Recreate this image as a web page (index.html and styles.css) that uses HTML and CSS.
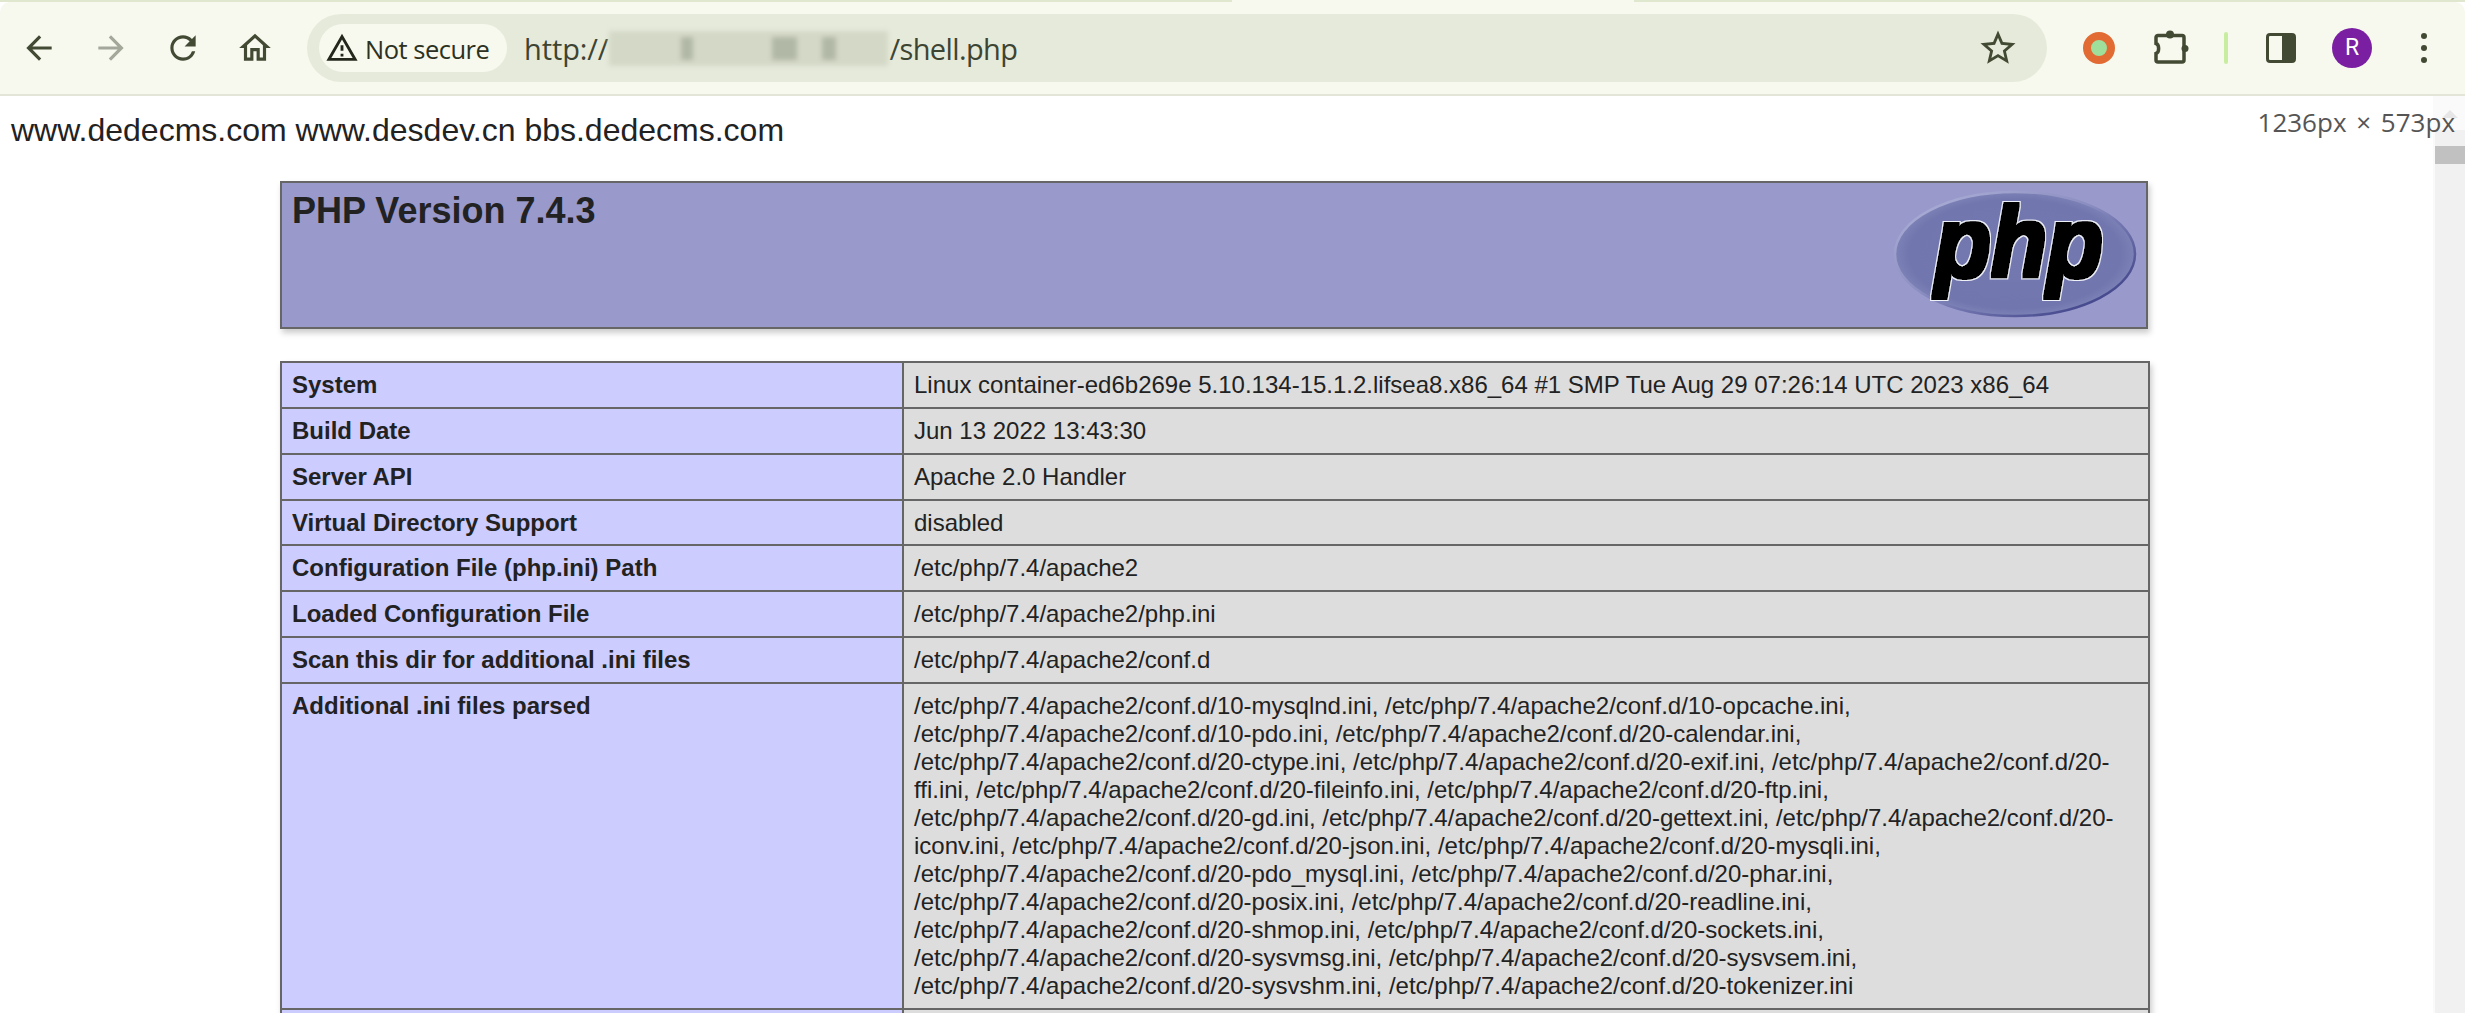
FILE: index.html
```html
<!DOCTYPE html>
<html lang="en">
<head>
<meta charset="utf-8">
<title>phpinfo()</title>
<link rel="stylesheet" href="styles.css">
</head>
<body>
<div class="browser">
  <div class="topstrip"><div class="tab-edge"></div></div>
  <header class="toolbar">
    <button class="nav"><svg class="nav-icon" viewBox="0 0 24 24"><path d="M20 11H7.83l5.59-5.59L12 4l-8 8 8 8 1.41-1.41L7.83 13H20v-2z"/></svg></button>
    <button class="nav dim"><svg class="nav-icon" viewBox="0 0 24 24"><path d="M12 4l-1.41 1.41L16.17 11H4v2h12.17l-5.58 5.59L12 20l8-8z"/></svg></button>
    <button class="nav"><svg class="nav-icon" viewBox="0 0 24 24"><path d="M17.65 6.35A7.958 7.958 0 0 0 12 4c-4.42 0-7.99 3.58-7.99 8s3.57 8 7.99 8c3.73 0 6.84-2.55 7.73-6h-2.08A5.99 5.99 0 0 1 12 18c-3.31 0-6-2.69-6-6s2.69-6 6-6c1.66 0 3.14.69 4.22 1.78L13 11h7V4l-2.35 2.35z"/></svg></button>
    <button class="nav"><svg class="nav-icon" viewBox="0 0 24 24"><path d="M12 5.69l5 4.5V18h-2v-6H9v6H7v-7.81l5-4.5M12 3 2 12h3v8h6v-6h2v6h6v-8h3L12 3z"/></svg></button>
    <div class="omnibox">
      <div class="chip">
        <svg class="warn" viewBox="0 0 24 24"><path d="M12 5.99 19.53 19H4.47L12 5.99M12 2 1 21h22L12 2zm1 14h-2v2h2v-2zm0-6h-2v4h2v-4z"/></svg>
        <span>Not secure</span>
      </div>
      <div class="url"><span>http://</span><span class="blurred"><i class="b1"></i><i class="b2"></i><i class="b3"></i></span><span class="path">/shell.php</span></div>
      <svg class="star" viewBox="0 0 24 24"><path d="M22 9.24l-7.19-.62L12 2 9.19 8.63 2 9.24l5.46 4.73L5.82 21 12 17.27 18.18 21l-1.63-7.03L22 9.24zM12 15.4l-3.76 2.27 1-4.28-3.32-2.88 4.38-.38L12 6.1l1.71 4.04 4.38.38-3.32 2.88 1 4.28L12 15.4z"/></svg>
    </div>
    <div class="tools">
      <div class="ext-ring"></div>
      <svg class="puzzle" viewBox="0 0 36 36"><path class="puzzle-body" d="M5 5.500H29a2 2 0 0 1 2 2V30a2 2 0 0 1-2 2H5a2 2 0 0 1-2-2V23.500c3.500-1 3.500-9 0-10V7.500a2 2 0 0 1 2-2z"/><circle class="puzzle-knob" cx="17" cy="4.500" r="4"/><circle class="puzzle-knob" cx="32" cy="18.500" r="3.500"/></svg>
      <div class="divider"></div>
      <svg class="panel" viewBox="0 0 30 30"><rect x="1.500" y="1.500" width="27" height="27" rx="2.500"/><path d="M16 1.500h10a2.500 2.500 0 0 1 2.500 2.500v22a2.500 2.500 0 0 1-2.500 2.500H16z"/></svg>
      <div class="avatar">R</div>
      <div class="dots"><i></i><i></i><i></i></div>
    </div>
  </header>
  <div class="viewport">
    <main class="page">
      <p class="ads">www.dedecms.com www.desdev.cn bbs.dedecms.com</p>
      <div class="center">
        <table class="info head">
          <tr class="h"><td>
            <svg class="logo" viewBox="0 0 242 126">
              <defs>
                <radialGradient id="lg" cx="0.5" cy="0.5" r="0.55">
                  <stop offset="0" stop-color="#7478b0"/>
                  <stop offset="0.8" stop-color="#7177ae"/>
                  <stop offset="1" stop-color="#8589bc"/>
                </radialGradient>
                <linearGradient id="rim" x1="0.1" y1="0.1" x2="0.9" y2="0.9">
                  <stop offset="0" stop-color="#a9acd4"/>
                  <stop offset="0.45" stop-color="#8a8dc0"/>
                  <stop offset="1" stop-color="#3f4389"/>
                </linearGradient>
                <filter id="heavy" x="-10%" y="-10%" width="120%" height="120%">
                  <feMorphology in="SourceAlpha" operator="dilate" radius="3.200" result="halo"/>
                  <feFlood flood-color="#eef0f8"/>
                  <feComposite in2="halo" operator="in" result="white"/>
                  <feMorphology in="SourceAlpha" operator="dilate" radius="1.800" result="body"/>
                  <feMerge><feMergeNode in="white"/><feMergeNode in="body"/></feMerge>
                </filter>
              </defs>
              <ellipse cx="121" cy="63" rx="120" ry="62" fill="url(#lg)" stroke="url(#rim)" stroke-width="2.500"/>
              <text class="logo-text" x="41" y="86" textLength="168" lengthAdjust="spacingAndGlyphs" filter="url(#heavy)">php</text>
            </svg>
            <h1>PHP Version 7.4.3</h1>
          </td></tr>
        </table>
        <table class="info">
          <tr><td class="e">System</td><td class="v">Linux container-ed6b269e 5.10.134-15.1.2.lifsea8.x86_64 #1 SMP Tue Aug 29 07:26:14 UTC 2023 x86_64</td></tr>
          <tr><td class="e">Build Date</td><td class="v">Jun 13 2022 13:43:30</td></tr>
          <tr><td class="e">Server API</td><td class="v">Apache 2.0 Handler</td></tr>
          <tr><td class="e">Virtual Directory Support</td><td class="v">disabled</td></tr>
          <tr><td class="e">Configuration File (php.ini) Path</td><td class="v">/etc/php/7.4/apache2</td></tr>
          <tr><td class="e">Loaded Configuration File</td><td class="v">/etc/php/7.4/apache2/php.ini</td></tr>
          <tr><td class="e">Scan this dir for additional .ini files</td><td class="v">/etc/php/7.4/apache2/conf.d</td></tr>
          <tr class="tall"><td class="e">Additional .ini files parsed</td><td class="v">/etc/php/7.4/apache2/conf.d/10-mysqlnd.ini, /etc/php/7.4/apache2/conf.d/10-opcache.ini, /etc/php/7.4/apache2/conf.d/10-pdo.ini, /etc/php/7.4/apache2/conf.d/20-calendar.ini, /etc/php/7.4/apache2/conf.d/20-ctype.ini, /etc/php/7.4/apache2/conf.d/20-exif.ini, /etc/php/7.4/apache2/conf.d/20-ffi.ini, /etc/php/7.4/apache2/conf.d/20-fileinfo.ini, /etc/php/7.4/apache2/conf.d/20-ftp.ini, /etc/php/7.4/apache2/conf.d/20-gd.ini, /etc/php/7.4/apache2/conf.d/20-gettext.ini, /etc/php/7.4/apache2/conf.d/20-iconv.ini, /etc/php/7.4/apache2/conf.d/20-json.ini, /etc/php/7.4/apache2/conf.d/20-mysqli.ini, /etc/php/7.4/apache2/conf.d/20-pdo_mysql.ini, /etc/php/7.4/apache2/conf.d/20-phar.ini, /etc/php/7.4/apache2/conf.d/20-posix.ini, /etc/php/7.4/apache2/conf.d/20-readline.ini, /etc/php/7.4/apache2/conf.d/20-shmop.ini, /etc/php/7.4/apache2/conf.d/20-sockets.ini, /etc/php/7.4/apache2/conf.d/20-sysvmsg.ini, /etc/php/7.4/apache2/conf.d/20-sysvsem.ini, /etc/php/7.4/apache2/conf.d/20-sysvshm.ini, /etc/php/7.4/apache2/conf.d/20-tokenizer.ini</td></tr>
          <tr><td class="e"></td><td class="v"></td></tr>
        </table>
      </div>
    </main>
    <div class="scrollbar"><div class="sb-button"><div class="sb-arrow"></div></div><div class="sb-thumb"></div></div>
    <div class="size-tip">1236px × 573px</div>
  </div>
</div>
</body>
</html>
```

FILE: styles.css
```css
* { box-sizing: border-box; }
html, body { margin: 0; padding: 0; height: 100%; overflow: hidden; background: #fff; }
.browser { width: 2465px; height: 1013px; display: flex; flex-direction: column; overflow: hidden; background: #fff; }
.topstrip { height: 2px; background: #dfe8cf; flex: none; position: relative; }
.tab-edge { position: absolute; left: 1232px; width: 402px; top: 0; height: 2px; background: #f7f9ef; }
.toolbar { height: 94px; flex: none; display: flex; align-items: center; background: #f7f9ef; border-bottom: 2px solid #e3e6d7; border-radius: 10px 10px 0 0; padding: 0 0 0 3px; }
.nav { width: 72px; height: 60px; padding: 0; border: 0; background: none; display: flex; align-items: center; justify-content: center; flex: none; }
.nav-icon { width: 38px; height: 38px; fill: #434a33; }
.nav.dim .nav-icon { fill: #a4a89b; }
.omnibox { margin-left: 16px; width: 1740px; height: 68px; flex: none; border-radius: 34px; background: #e6eadb; display: flex; align-items: center; padding-left: 12px; padding-right: 28px; }
.chip { width: 188px; height: 48px; flex: none; border-radius: 24px; background: #f7f9ef; display: flex; align-items: center; padding: 2px 0 0 6px; font: 25.500px "Open Sans", sans-serif; color: #2c3122; gap: 6px; letter-spacing: -0.5px; }
.warn { width: 34px; height: 34px; fill: #23271c; flex: none; margin-top: -2px; }
.url { margin-left: 17px; display: flex; align-items: center; font: 29px "Open Sans", sans-serif; color: #3d4432; flex: 1; letter-spacing: -0.1px; }
.path { letter-spacing: -0.6px; }
.blurred { width: 279px; height: 35px; margin: 0 1px; background: #d4d8c7; filter: blur(2.500px); position: relative; display: block; }
.blurred i { position: absolute; top: 6px; bottom: 6px; background: #b2b8a6; }
.b1 { left: 72px; width: 12px; }
.b2 { left: 163px; width: 25px; }
.b3 { left: 213px; width: 14px; }
.star { width: 42px; height: 42px; fill: #434a33; flex: none; }
.tools { flex: none; display: flex; align-items: center; margin-left: 36px; }
.ext-ring { width: 32px; height: 32px; border-radius: 50%; background: #9fdf9c; border: 8px solid #e26a33; }
.puzzle { width: 36px; height: 36px; margin-left: 38px; overflow: visible; }
.puzzle-body { fill: none; stroke: #434a33; stroke-width: 3.500; }
.puzzle-knob { fill: #434a33; }
.divider { width: 4px; height: 32px; margin-left: 35px; border-radius: 2px; background: #c9eda0; }
.panel { width: 30px; height: 30px; margin-left: 38px; }
.panel rect { fill: none; stroke: #434a33; stroke-width: 3; }
.panel path { fill: #434a33; }
.avatar { width: 40px; height: 40px; margin-left: 36px; border-radius: 50%; background: #7b1fa2; color: #fff; font: 23px/40px "Roboto", sans-serif; text-align: center; }
.dots { margin-left: 49px; display: flex; flex-direction: column; gap: 6px; }
.dots i { display: block; width: 6px; height: 6px; border-radius: 50%; background: #434a33; }
.viewport { flex: 1; min-height: 0; display: flex; position: relative; }
.page { flex: 1; min-width: 0; overflow: hidden; padding-top: 16px; font-family: "Liberation Sans", Arial, sans-serif; color: #222; }
.ads { margin: 0 0 32px 11px; font-size: 32px; line-height: 37px; color: #222; }
.center { margin-left: 280px; width: 1868px; }
.info { width: 1868px; border-collapse: collapse; table-layout: fixed; box-shadow: 2px 4px 6px #ccc; margin-bottom: 32px; }
.info td { border: 2px solid #666; font-size: 24px; line-height: 27.860px; padding: 8px 10px; vertical-align: baseline; }
.info .tall td { line-height: 28px; }
.head td { height: 146px; background: #99c; vertical-align: top; }
.head h1 { margin: -1px 0 0; font-size: 36px; line-height: 42px; font-weight: bold; color: #222; }
.logo { float: right; width: 242px; height: 126px; margin-top: 0; overflow: visible; }
.logo-text { font: italic bold 100px "Liberation Sans", sans-serif; fill: #000; }
.e { width: 622px; background: #ccf; font-weight: bold; }
.v { width: 1246px; background: #ddd; }
.scrollbar { width: 32px; flex: none; background: #f1f1f1; display: flex; flex-direction: column; align-items: flex-end; border-left: 2px solid #fafafa; }
.sb-button { width: 30px; height: 34px; background: #fafafa; padding-top: 14px; display: flex; justify-content: center; }
.sb-arrow { width: 0; height: 0; border-left: 8px solid transparent; border-right: 8px solid transparent; border-bottom: 8px solid #e6e6e6; }
.sb-thumb { margin-top: 16px; width: 30px; height: 18px; background: #c1c1c1; }
.size-tip { position: absolute; right: 10px; top: 9px; font: 26px/34px "Open Sans", sans-serif; color: #555; word-spacing: 3px; }
```
